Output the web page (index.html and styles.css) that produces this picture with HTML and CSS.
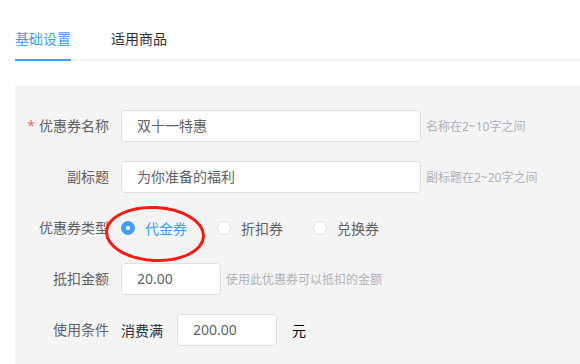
FILE: index.html
```html
<!DOCTYPE html>
<html lang="zh-CN">
<head>
<meta charset="utf-8">
<title>优惠券</title>
<link rel="stylesheet" href="styles.css">
</head>
<body>
<div class="page">
  <div class="tabs">
    <div class="tab active">基础设置</div>
    <div class="tab">适用商品</div>
  </div>
  <div class="panel">
    <div class="row">
      <label class="label"><span class="star">*</span>优惠券名称</label>
      <div class="content">
        <div class="input wide">双十一特惠</div>
        <span class="hint">名称在2~10字之间</span>
      </div>
    </div>
    <div class="row">
      <label class="label">副标题</label>
      <div class="content">
        <div class="input wide">为你准备的福利</div>
        <span class="hint">副标题在2~20字之间</span>
      </div>
    </div>
    <div class="row">
      <label class="label">优惠券类型</label>
      <div class="content radios">
        <span class="radio checked"><span class="dot"></span><span class="rtext">代金券</span></span>
        <span class="radio"><span class="dot"></span><span class="rtext">折扣券</span></span>
        <span class="radio"><span class="dot"></span><span class="rtext">兑换券</span></span>
        <svg class="circle-mark" width="110" height="64" viewBox="0 0 110 64">
          <ellipse cx="50" cy="32" rx="48.5" ry="26.5" fill="none" stroke="#f51b12" stroke-width="3" transform="rotate(3 50 32)"/>
        </svg>
      </div>
    </div>
    <div class="row">
      <label class="label">抵扣金额</label>
      <div class="content">
        <div class="input narrow">20.00</div>
        <span class="hint">使用此优惠券可以抵扣的金额</span>
      </div>
    </div>
    <div class="row">
      <label class="label">使用条件</label>
      <div class="content">
        <span class="plain">消费满</span>
        <div class="input narrow">200.00</div>
        <span class="plain unit">元</span>
      </div>
    </div>
  </div>
</div>
</body>
</html>
```
FILE: styles.css
```css
html, body {
  margin: 0;
  padding: 0;
  background: #fff;
  overflow: hidden;
}
body {
  font-family: "Noto Sans", "Noto Sans CJK SC", sans-serif;
  font-size: 14px;
  color: #606266;
}
.page {
  padding: 19px 0 0 15px;
}
.tabs {
  display: flex;
  height: 40px;
  border-bottom: 2px solid #f0f1f6;
  margin-bottom: 24px;
}
.tab {
  padding: 0 20px;
  line-height: 40px;
  height: 40px;
  color: #303133;
  font-size: 14px;
  position: relative;
}
.tab:first-child {
  padding-left: 0;
}
.tab.active {
  color: #409eff;
}
.tab.active::after {
  content: "";
  position: absolute;
  left: 0;
  right: 20px;
  bottom: -2px;
  height: 2px;
  background: #409eff;
}
.panel {
  background: #f4f4f4;
  padding: 25px 0 19px 0;
}
.row {
  display: flex;
  align-items: center;
  height: 32px;
  margin-bottom: 19px;
}
.row:last-child {
  margin-bottom: 0;
}
.label {
  width: 106px;
  box-sizing: border-box;
  padding-right: 12px;
  text-align: right;
  color: #606266;
  line-height: 32px;
}
.star {
  color: #f56c6c;
  margin-right: 4px;
}
.content {
  display: flex;
  align-items: center;
  position: relative;
}
.input {
  box-sizing: border-box;
  height: 32px;
  line-height: 30px;
  border: 1px solid #dcdfe6;
  border-radius: 4px;
  background: #fff;
  padding: 0 15px;
  color: #606266;
}
.input.wide { width: 300px; }
.input.narrow { width: 100px; }
.hint {
  margin-left: 5px;
  font-size: 12px;
  color: #aeb1b8;
}
.plain {
  color: #303133;
  margin-right: 14px;
}
.unit {
  margin: 0 0 0 15px;
  color: #000;
}
.radio {
  display: inline-flex;
  align-items: center;
  margin-right: 30px;
  color: #606266;
}
.dot {
  width: 14px;
  height: 14px;
  box-sizing: border-box;
  border: 1px solid #dcdfe6;
  border-radius: 50%;
  background: #fff;
  position: relative;
}
.radio.checked .dot {
  border-color: #409eff;
  background: #409eff;
}
.radio.checked .dot::after {
  content: "";
  position: absolute;
  width: 4px;
  height: 4px;
  border-radius: 50%;
  background: #fff;
  left: 50%;
  top: 50%;
  transform: translate(-50%, -50%);
}
.rtext {
  padding-left: 10px;
}
.radio.checked .rtext {
  color: #409eff;
}
.circle-mark {
  position: absolute;
  left: -16px;
  top: -16px;
  pointer-events: none;
}
```
